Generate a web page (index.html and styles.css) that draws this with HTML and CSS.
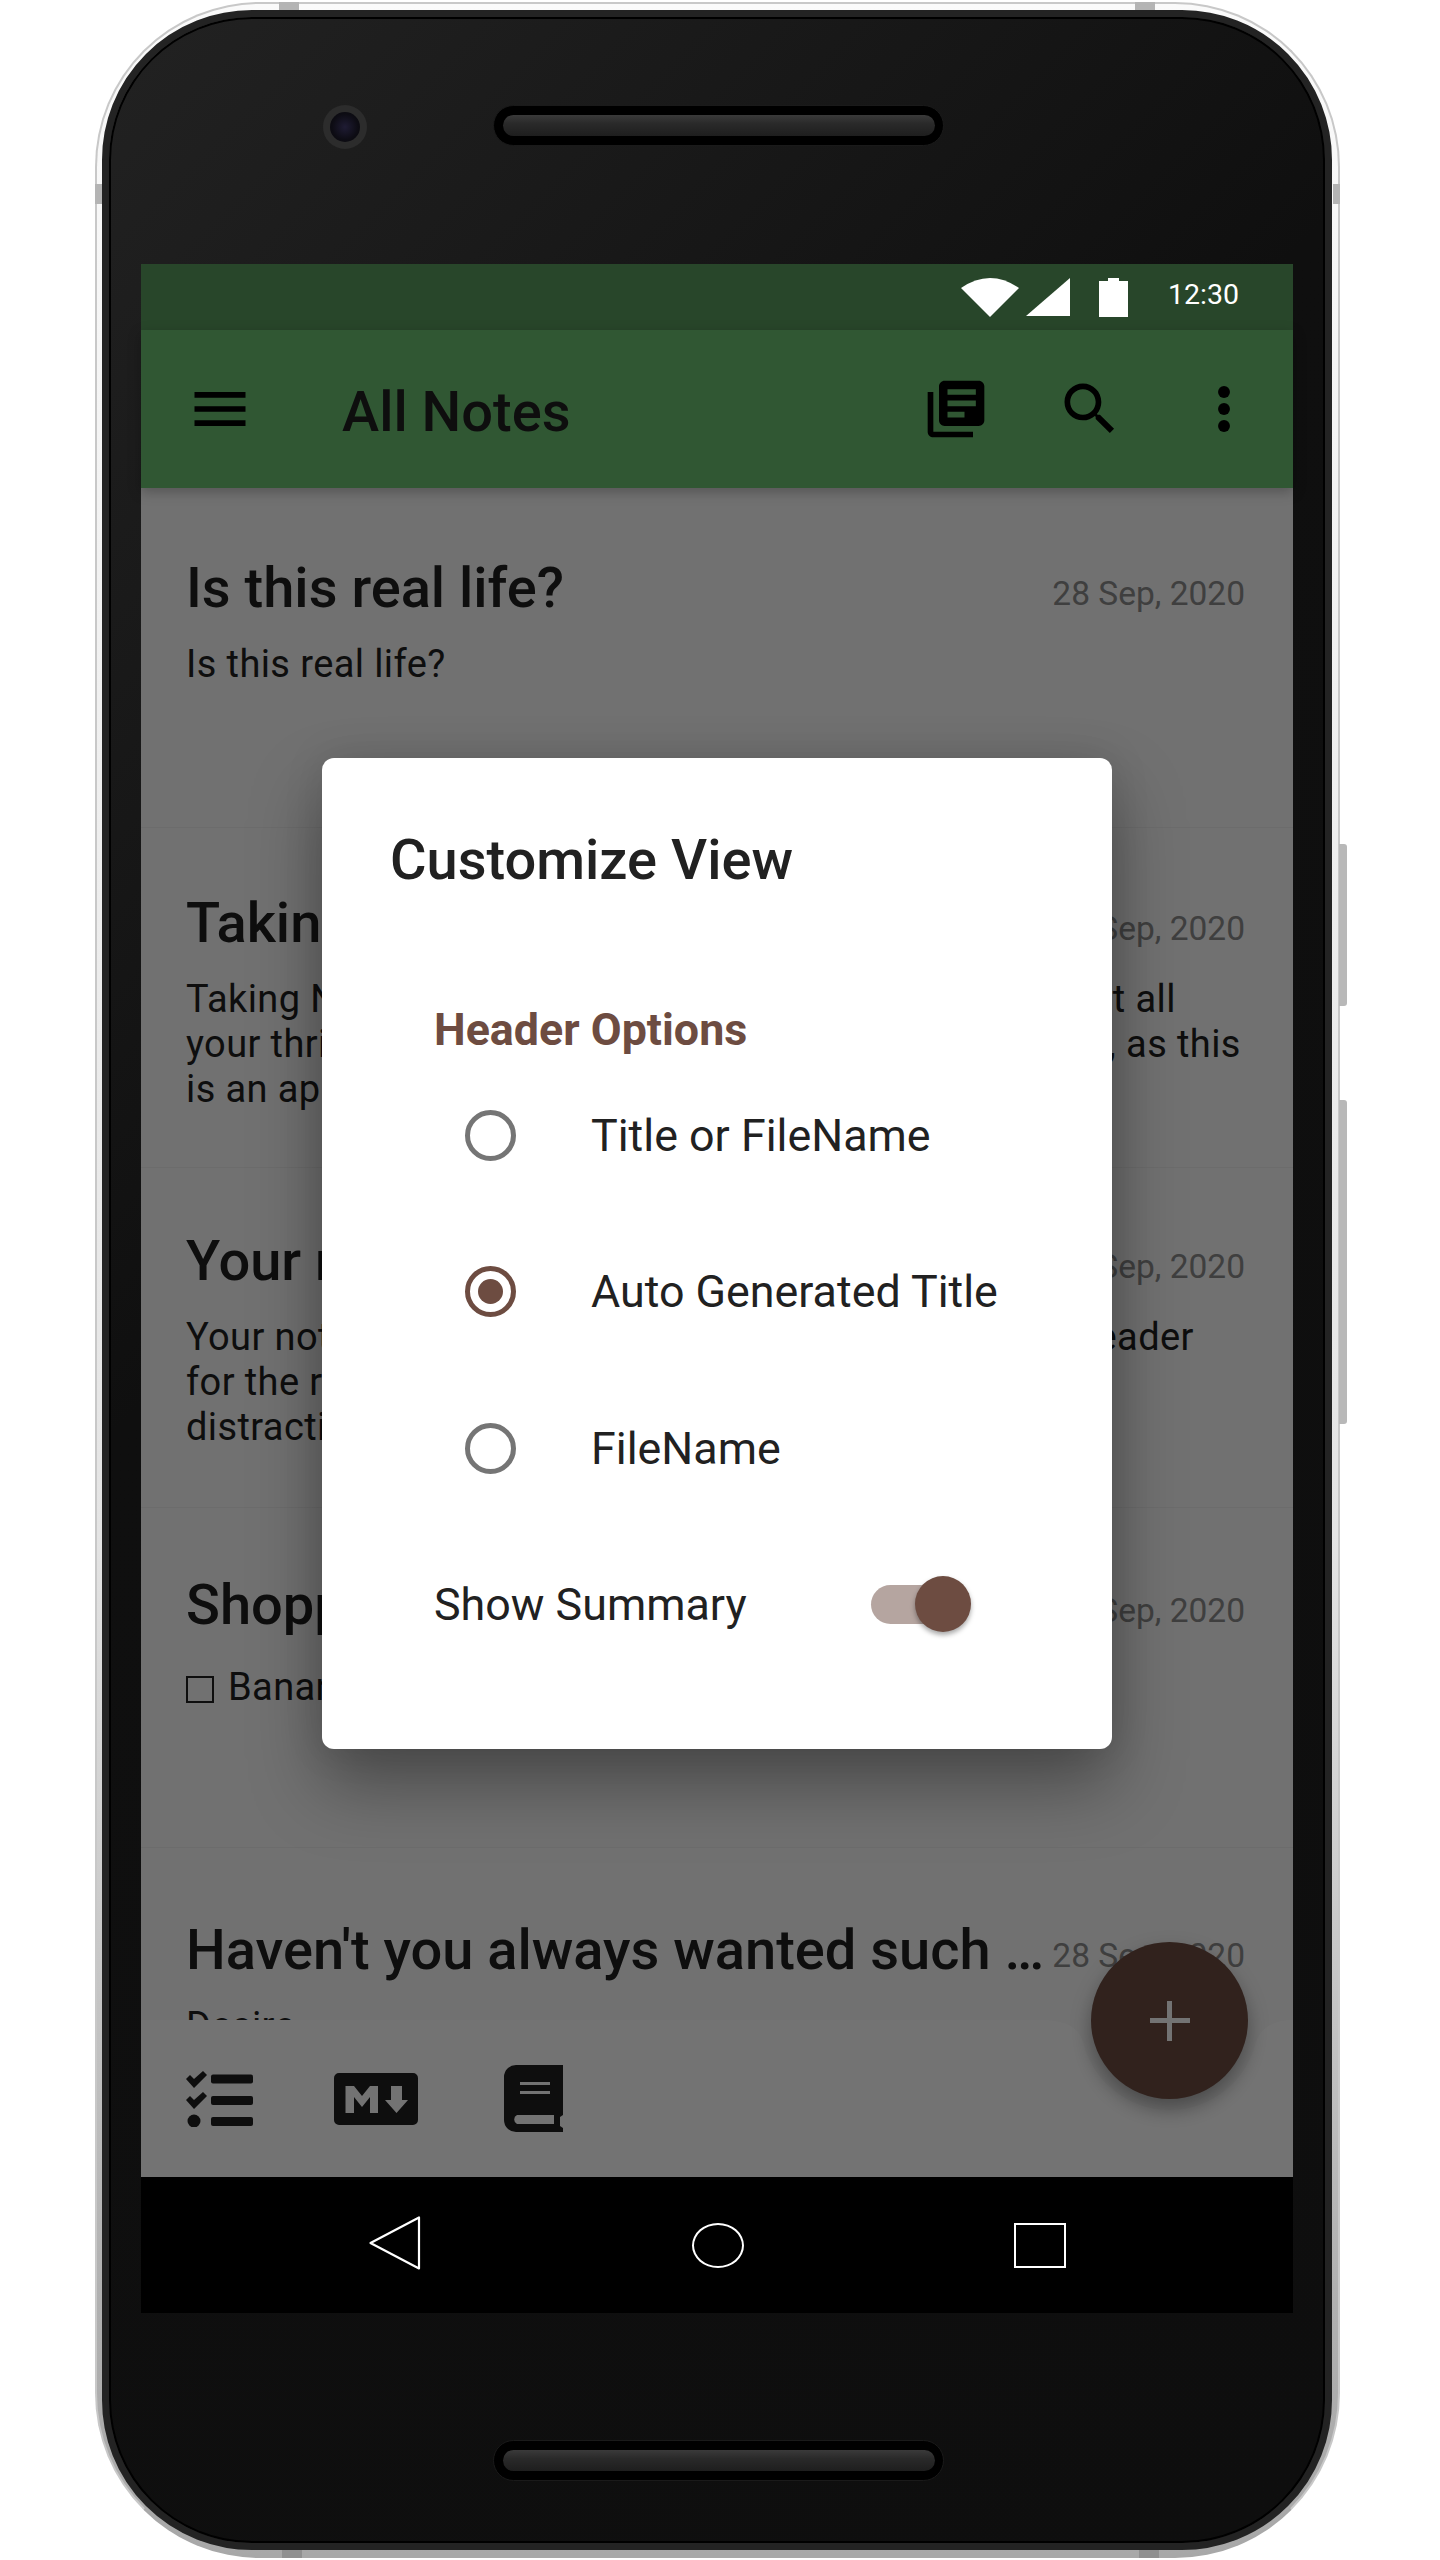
FILE: index.html
```html
<!DOCTYPE html>
<html lang="en">
<head>
    <meta charset="UTF-8">
    <meta name="viewport" content="width=device-width, initial-scale=1.0">
    <title>All Notes</title>
    <link rel="stylesheet" href="styles.css">
</head>
<body>
    <div class="phone">
        <span class="band band-top-left"></span>
        <span class="band band-top-right"></span>
        <span class="band band-left"></span>
        <span class="band band-right"></span>
        <span class="band band-bottom-left"></span>
        <span class="band band-bottom-right"></span>
        <span class="side-button side-button-power"></span>
        <span class="side-button side-button-volume"></span>

        <div class="body">
            <div class="bezel">
                <div class="camera"><span class="lens"></span></div>
                <div class="speaker"><span class="grille"></span></div>
            </div>

            <div class="screen">
                <div class="status-bar">
                    <svg class="wifi" viewBox="0 0 58 39"><path d="M29 39L0 10Q29-10 58 10Z"/></svg>
                    <svg class="signal" viewBox="0 0 44 38"><path d="M0 38L44 0V38Z"/></svg>
                    <svg class="battery" viewBox="0 0 29 39"><path d="M9 0H20V3H29V39H0V3H9Z"/></svg>
                    <span class="time">12:30</span>
                </div>

                <div class="app">
                    <header class="toolbar">
                        <svg class="tool-icon" viewBox="0 0 24 24"><path d="M3 18h18v-2H3v2zm0-5h18v-2H3v2zm0-7v2h18V6H3z"/></svg>
                        <h1 class="toolbar-title">All Notes</h1>
                        <div class="toolbar-actions">
                            <svg class="tool-icon" viewBox="0 0 24 24"><path d="M4 6H2v14c0 1.1.9 2 2 2h14v-2H4V6zm16-4H8c-1.1 0-2 .9-2 2v12c0 1.1.9 2 2 2h12c1.1 0 2-.9 2-2V4c0-1.1-.9-2-2-2zm-1 9H9V9h10v2zm-4 4H9v-2h6v2zm4-8H9V5h10v2z"/></svg>
                            <svg class="tool-icon" viewBox="0 0 24 24"><path d="M15.5 14h-.79l-.28-.27C15.41 12.59 16 11.11 16 9.5 16 5.91 13.09 3 9.5 3S3 5.91 3 9.5 5.91 16 9.5 16c1.61 0 3.09-.59 4.23-1.57l.27.28v.79l5 4.99L20.49 19l-4.99-5zm-6 0C7.01 14 5 11.99 5 9.5S7.01 5 9.5 5 14 7.01 14 9.5 11.99 14 9.5 14z"/></svg>
                            <svg class="tool-icon" viewBox="0 0 24 24"><circle cx="12" cy="6" r="2.1"/><circle cx="12" cy="12" r="2.1"/><circle cx="12" cy="18" r="2.1"/></svg>
                        </div>
                    </header>

                    <main class="notes">
                        <article class="note">
                            <div class="note-head">
                                <h2 class="note-title">Is this real life?</h2>
                                <span class="note-date">28 Sep, 2020</span>
                            </div>
                            <p class="note-text">Is this real life?</p>
                        </article>
                        <article class="note note-tight">
                            <div class="note-head">
                                <h2 class="note-title">Taking Notes</h2>
                                <span class="note-date">28 Sep, 2020</span>
                            </div>
                            <p class="note-text">Taking Notes is a simple thing, so we made sure to get all<br>your thrilling ideas and thoughts written in your space, as this<br>is an app for that</p>
                        </article>
                        <article class="note note-tighter">
                            <div class="note-head">
                                <h2 class="note-title">Your notes, your way</h2>
                                <span class="note-date">28 Sep, 2020</span>
                            </div>
                            <p class="note-text">Your notes always look clean, with smart titles as a header<br>for the rest of your note content, with absolutely no<br>distractions at all</p>
                        </article>
                        <article class="note note-checklist">
                            <div class="note-head">
                                <h2 class="note-title">Shopping List</h2>
                                <span class="note-date">28 Sep, 2020</span>
                            </div>
                            <p class="note-text"><span class="box"></span>Bananas</p>
                        </article>
                        <article class="note note-last">
                            <div class="note-head">
                                <h2 class="note-title">Haven't you always wanted such a simple notes app?</h2>
                                <span class="note-date">28 Sep, 2020</span>
                            </div>
                            <p class="note-text">Desire</p>
                        </article>
                    </main>

                    <footer class="bottom-bar">
                        <svg class="bar-shape" viewBox="0 0 1152 157"><path d="M0 0H900C925 0 938 8 942 22A89 89 0 0 0 1115 22C1120 8 1132 0 1152 0V157H0Z"/></svg>
                        <svg class="bar-icon list-icon" viewBox="0 0 67 56">
                            <path d="M0 8L4 4 8 8 17 0 21 4 8 17Z"/>
                            <path d="M0 29L4 25 8 29 17 21 21 25 8 38Z"/>
                            <circle cx="8" cy="50" r="6.5"/>
                            <rect x="25" y="3.500" width="42" height="9" rx="2"/>
                            <rect x="25" y="25" width="42" height="9" rx="2"/>
                            <rect x="25" y="46" width="42" height="9" rx="2"/>
                        </svg>
                        <svg class="bar-icon md-icon" viewBox="0 0 84 52">
                            <path fill-rule="evenodd" d="M5 0H79A5 5 0 0 1 84 5V47A5 5 0 0 1 79 52H5A5 5 0 0 1 0 47V5A5 5 0 0 1 5 0ZM11.500 13V40H20V24L28 34 36 24V40H44V13H36L28 23 20 13ZM57 13V27H51L62.500 40 74 27H68V13Z"/>
                        </svg>
                        <svg class="bar-icon book-icon" viewBox="0 0 59 67">
                            <path fill-rule="evenodd" d="M12 0H59V50L56 52V61L59 63V67H12A12 12 0 0 1 0 55V12A12 12 0 0 1 12 0ZM16 17V20H46V17ZM16 26V29H46V26ZM13 50A5 5 0 0 0 13 59H50V50Z"/>
                        </svg>
                        <button class="fab" type="button"><span class="fab-plus"></span></button>
                    </footer>

                    <div class="scrim">
                        <section class="dialog">
                            <h2 class="dialog-title">Customize View</h2>
                            <h3 class="dialog-section">Header Options</h3>
                            <div class="option"><span class="radio"></span><span class="option-label">Title or FileName</span></div>
                            <div class="option"><span class="radio radio-on"></span><span class="option-label">Auto Generated Title</span></div>
                            <div class="option"><span class="radio"></span><span class="option-label">FileName</span></div>
                            <div class="toggle-row">
                                <span class="toggle-label">Show Summary</span>
                                <span class="switch"><span class="switch-thumb"></span></span>
                            </div>
                        </section>
                    </div>
                </div>

                <nav class="nav-bar">
                    <svg class="nav-back" viewBox="0 0 52 54"><path d="M1.500 27L50 1.500V52.500Z"/></svg>
                    <span class="nav-home"></span>
                    <span class="nav-recent"></span>
                </nav>
            </div>

            <div class="speaker speaker-bottom"><span class="grille"></span></div>
        </div>
    </div>
</body>
</html>
```

FILE: styles.css
```css
* {
    box-sizing: border-box;
}

body {
    margin: 0;
    background-color: #fff;
    font-family: Roboto, "Liberation Sans", sans-serif;
}

h1, h2, h3, p {
    margin: 0;
}

/* device */
.phone {
    position: relative;
    width: 1245px;
    height: 2556px;
    margin: 2px 0 0 95px;
    padding: 6px 6px 6px 5px;
    border: 2px solid #c8c8c8;
    border-bottom-color: #a8a8a8;
    border-radius: 165px;
    background: linear-gradient(180deg, #fafafa 0%, #e4e4e4 60%, #b0b0b0 90%, #a8a8a8 100%);
}

.band {
    position: absolute;
    background-color: #b4b4b4;
}

.band-top-left, .band-top-right {
    top: -2px;
    width: 20px;
    height: 8px;
}

.band-top-left {
    left: 182px;
}

.band-top-right {
    left: 1038px;
}

.band-left, .band-right {
    top: 180px;
    width: 7px;
    height: 20px;
}

.band-left {
    left: -2px;
}

.band-right {
    right: -2px;
}

.band-bottom-left, .band-bottom-right {
    bottom: -2px;
    width: 20px;
    height: 8px;
    background-color: #909090;
}

.band-bottom-left {
    left: 185px;
}

.band-bottom-right {
    left: 1042px;
}

.side-button {
    position: absolute;
    right: -9px;
    width: 8px;
    border-radius: 0 3px 3px 0;
    background-color: #b8b8b8;
}

.side-button-power {
    top: 840px;
    height: 162px;
}

.side-button-volume {
    top: 1096px;
    height: 324px;
}

.body {
    height: 100%;
    border: 7px solid #232323;
    border-radius: 150px;
    background: linear-gradient(135deg, #222 0%, #0f0f0f 38%, #0e0e0e 100%);
    box-shadow: inset 0 0 0 2px #000;
}

.bezel {
    display: flex;
    align-items: flex-start;
    height: 247px;
    padding: 88px 0 0 214px;
}

.camera {
    display: flex;
    align-items: center;
    justify-content: center;
    width: 44px;
    height: 44px;
    margin-right: 126px;
    border-radius: 50%;
    background-color: #2c2c2c;
}

.lens {
    width: 30px;
    height: 30px;
    border-radius: 50%;
    background: radial-gradient(circle, #1f1c34 0%, #0d0c14 60%, #08080a 100%);
}

.speaker {
    display: flex;
    align-items: center;
    justify-content: center;
    width: 451px;
    height: 41px;
    border: 1px solid #1a1a1a;
    border-radius: 21px;
    background-color: #000;
}

.speaker-bottom {
    margin: 127px 0 0 384px;
}

.grille {
    width: 432px;
    height: 21px;
    border-radius: 11px;
    background: linear-gradient(180deg, #3a3a3a 0%, #2a2a2a 40%, #1e1e1e 100%);
}

/* screen */
.screen {
    display: flex;
    flex-direction: column;
    width: 1152px;
    height: 2049px;
    margin-left: 32px;
    background-color: #000;
}

.status-bar {
    display: flex;
    align-items: center;
    justify-content: flex-end;
    flex-shrink: 0;
    height: 66px;
    padding-right: 54px;
    background-color: #28462a;
    fill: #fff;
}

.wifi {
    width: 58px;
    height: 39px;
    margin-right: 7px;
}

.signal {
    width: 44px;
    height: 38px;
    margin-right: 29px;
}

.battery {
    width: 29px;
    height: 39px;
    margin-right: 40px;
}

.time {
    margin-bottom: 5px;
    color: #fff;
    font-size: 28.500px;
}

.app {
    position: relative;
    display: flex;
    flex-direction: column;
    flex: 1;
    min-height: 0;
}

.toolbar {
    position: relative;
    z-index: 1;
    display: flex;
    align-items: center;
    flex-shrink: 0;
    height: 158px;
    padding: 0 35px 0 45px;
    background-color: #6bc172;
    box-shadow: 0 4px 12px rgba(0, 0, 0, 0.25);
}

.tool-icon {
    width: 68px;
    height: 68px;
    fill: #000;
}

.toolbar-title {
    margin: 6px 0 0 88px;
    color: #212121;
    font-size: 56px;
    font-weight: 500;
}

.toolbar-actions {
    display: flex;
    gap: 66px;
    margin-left: auto;
}

/* note list */
.notes {
    flex: 1;
    min-height: 0;
    overflow: hidden;
    background-color: #fafafa;
}

.note {
    height: 340px;
    padding: 67px 48px 0 45px;
    border-bottom: 1px solid #f0f0f0;
    color: #212121;
}

.note-tight {
    padding-top: 62px;
}

.note-tighter {
    padding-top: 60px;
}

.note-checklist {
    padding-top: 64px;
}

.note-last {
    padding-top: 69px;
}

.note-head {
    display: flex;
    align-items: flex-start;
    gap: 8px;
}

.note-title {
    flex: 1;
    min-width: 0;
    overflow: hidden;
    font-size: 56px;
    font-weight: 500;
    white-space: nowrap;
    text-overflow: ellipsis;
}

.note-date {
    flex-shrink: 0;
    margin-top: 19px;
    color: #8c8c8c;
    font-size: 33.500px;
}

.note-text {
    margin-top: 21px;
    font-size: 38px;
    line-height: 45px;
    letter-spacing: 0.4px;
}

.note-checklist .note-text {
    margin-top: 27px;
}

.box {
    display: inline-block;
    width: 28px;
    height: 27px;
    margin-right: 14px;
    border: 2px solid #212121;
    vertical-align: -3px;
}

/* bottom bar */
.bottom-bar {
    position: relative;
    display: flex;
    align-items: center;
    flex-shrink: 0;
    height: 157px;
    padding-left: 45px;
    background-color: #fafafa;
}

.bar-shape {
    position: absolute;
    top: 0;
    left: 0;
    width: 1152px;
    height: 157px;
    fill: #fff;
}

.bar-icon {
    position: relative;
    fill: #212121;
}

.list-icon {
    width: 67px;
    height: 56px;
    margin-right: 81px;
}

.md-icon {
    width: 84px;
    height: 52px;
    margin-right: 86px;
}

.book-icon {
    width: 59px;
    height: 67px;
}

.fab {
    position: absolute;
    top: -78px;
    left: 950px;
    display: flex;
    align-items: center;
    justify-content: center;
    width: 157px;
    height: 157px;
    padding: 0;
    border: none;
    border-radius: 50%;
    background-color: #6d4c41;
    box-shadow: 0 10px 20px rgba(0, 0, 0, 0.35);
}

.fab-plus {
    width: 40px;
    height: 40px;
    background:
        linear-gradient(#fff, #fff) center / 100% 5px no-repeat,
        linear-gradient(#fff, #fff) center / 5px 100% no-repeat;
}

/* dialog */
.scrim {
    position: absolute;
    top: 0;
    right: 0;
    bottom: 0;
    left: 0;
    z-index: 2;
    display: flex;
    align-items: center;
    justify-content: center;
    background-color: rgba(0, 0, 0, 0.55);
}

.dialog {
    width: 790px;
    height: 991px;
    padding: 72px 0 0 68px;
    border-radius: 12px;
    background-color: #fff;
    box-shadow: 0 36px 70px rgba(0, 0, 0, 0.35), 0 0 40px rgba(0, 0, 0, 0.1);
    color: #212121;
}

.dialog-title {
    font-size: 56px;
    font-weight: 500;
    line-height: 60px;
}

.dialog-section {
    margin: 113px 0 0 44px;
    color: #6d4c41;
    font-size: 44.800px;
    font-weight: 700;
    line-height: 54px;
}

.option {
    display: flex;
    align-items: center;
    height: 156.500px;
    margin-left: 75px;
}

.radio {
    display: flex;
    align-items: center;
    justify-content: center;
    width: 51px;
    height: 51px;
    margin-right: 75px;
    border: 5px solid #757575;
    border-radius: 50%;
}

.radio-on {
    border-color: #6d4c41;
}

.radio-on::after {
    content: "";
    width: 25px;
    height: 25px;
    border-radius: 50%;
    background-color: #6d4c41;
}

.option-label, .toggle-label {
    font-size: 44.800px;
}

.toggle-row {
    display: flex;
    align-items: center;
    height: 156.500px;
    margin-left: 44px;
}

.switch {
    position: relative;
    width: 92px;
    height: 39px;
    margin-left: auto;
    margin-right: 149px;
    border-radius: 20px;
    background-color: #b5a5a0;
}

.switch-thumb {
    position: absolute;
    top: -9px;
    right: -8px;
    width: 56px;
    height: 56px;
    border-radius: 50%;
    background-color: #6d4c41;
    box-shadow: 0 3px 5px rgba(0, 0, 0, 0.35);
}

/* system nav */
.nav-bar {
    display: flex;
    align-items: center;
    justify-content: space-between;
    flex-shrink: 0;
    height: 136px;
    padding: 0 227px 0 228px;
    background-color: #000;
}

.nav-back {
    width: 52px;
    height: 54px;
    margin-bottom: 4px;
    fill: none;
    stroke: #fff;
    stroke-width: 2.2;
    stroke-linejoin: round;
}

.nav-home {
    width: 52px;
    height: 45px;
    border: 2px solid #fff;
    border-radius: 50%;
}

.nav-recent {
    width: 52px;
    height: 45px;
    border: 2px solid #fff;
}
```
